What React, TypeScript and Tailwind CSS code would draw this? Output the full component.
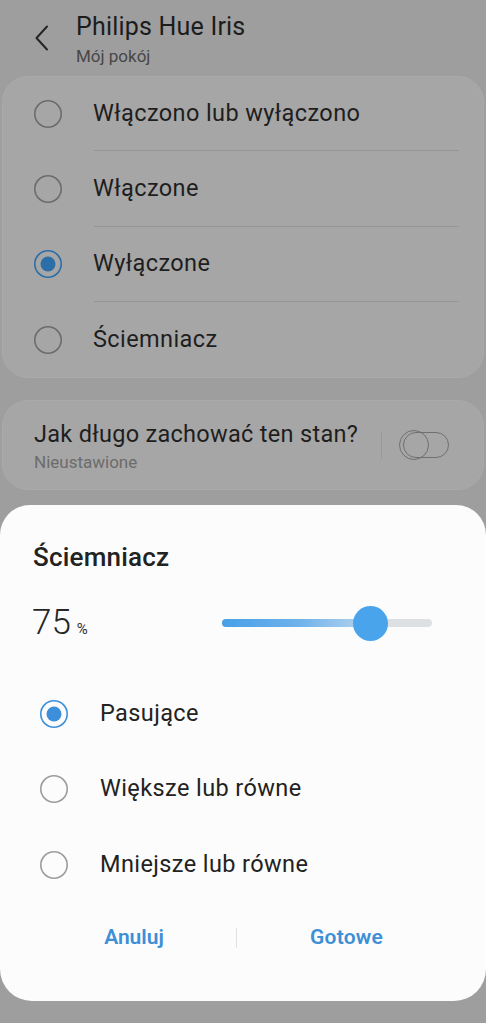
import React from "react";

function Radio({ checked, dim }: { checked?: boolean; dim?: boolean }) {
  if (checked) {
    const c = dim ? "#2b6ea8" : "#3d8fdc";
    return (
      <svg width="30" height="30" viewBox="0 0 30 30" className="shrink-0">
        <circle cx="15" cy="15" r="13.2" fill="none" stroke={c} strokeWidth="1.6" />
        <circle cx="15" cy="15" r="7.5" fill={c} />
      </svg>
    );
  }
  const c = dim ? "#6c6c6c" : "#9c9c9c";
  return (
    <svg width="30" height="30" viewBox="0 0 30 30" className="shrink-0">
      <circle cx="15" cy="15" r="13.2" fill="none" stroke={c} strokeWidth="1.6" />
    </svg>
  );
}

export default function App() {
  const font = { fontFamily: "Roboto, 'Noto Sans', sans-serif" };
  const topRows = ["Włączono lub wyłączono", "Włączone", "Wyłączone", "Ściemniacz"];
  const rowH = ["h-[73px]", "h-[75px]", "h-[74px]", "h-[75px]"];
  const sheetRows = ["Pasujące", "Większe lub równe", "Mniejsze lub równe"];
  const sheetH = ["h-[75px]", "h-[76px]", "h-[75px]"];
  return (
    <div className="w-[486px] h-[1023px] bg-[#9e9e9e] flex flex-col overflow-hidden" style={font}>
      {/* Header */}
      <div className="h-[76px] flex pt-[12px]">
        <div className="w-[76px] flex justify-start pl-[33px] pt-[13px]">
          <svg width="18" height="26" viewBox="0 0 18 26">
            <path d="M14 1.5 L3.5 13 L14 24.5" fill="none" stroke="#262626" strokeWidth="2" strokeLinecap="round" strokeLinejoin="round" />
          </svg>
        </div>
        <div className="flex flex-col">
          <div className="text-[25px] leading-[30px] tracking-[0.2px] text-[#1c1c1c]">Philips Hue Iris</div>
          <div className="text-[17px] leading-[20px] mt-[4px] text-[#474747]">Mój pokój</div>
        </div>
      </div>

      {/* Card 1 */}
      <div className="mx-[2px] rounded-[26px] bg-[#a6a6a6] border border-[#aaaaaa]">
        {topRows.map((t, i) => (
          <div key={t}>
            {i > 0 && <div className="ml-[91px] mr-[24px] h-px bg-[#959595]" />}
            <div className={`${rowH[i]} flex items-center`}>
              <div className="w-[90px] flex pl-[30px]">
                <Radio checked={i === 2} dim />
              </div>
              <div className="text-[23.5px] tracking-[0.4px] text-[#1e1e1e]">{t}</div>
            </div>
          </div>
        ))}
      </div>

      {/* Card 2 */}
      <div className="mx-[2px] mt-[22px] h-[90px] rounded-[26px] bg-[#a6a6a6] border border-[#aaaaaa] flex items-start">
        <div className="flex-1 pl-[31px] pt-[19px]">
          <div className="text-[23.5px] leading-[28px] tracking-[0.3px] text-[#1e1e1e]">Jak długo zachować ten stan?</div>
          <div className="text-[17px] leading-[20px] mt-[4px] text-[#6c6c6c]">Nieustawione</div>
        </div>
        <div className="w-px h-[28px] bg-[#999999] mr-[17px] mt-[30px]" />
        <div className="relative w-[50px] h-[30px] mr-[34px] mt-[29px]">
          <div className="absolute left-[4px] right-0 top-[2px] bottom-[2px] rounded-full border-[1.6px] border-[#707070]" />
          <div className="absolute left-0 top-0 w-[30px] h-[30px] rounded-full border-[1.6px] border-[#707070]" />
        </div>
      </div>

      {/* Sheet */}
      <div className="mt-[15px] h-[496px] bg-[#fcfcfc] rounded-t-[30px] rounded-b-[32px] flex flex-col">
        <div className="pt-[37px] pl-[33px] text-[26px] leading-[30px] tracking-[0.2px] font-medium text-[#222222]">Ściemniacz</div>
        <div className="mt-[31px] h-[40px] flex items-center">
          <div className="w-[222px] pl-[32px] flex items-baseline">
            <span className="text-[35px] leading-[40px] font-light text-[#262626]">75</span>
            <span className="text-[15px] ml-[6px] text-[#333333]">%</span>
          </div>
          <div className="relative w-[210px] h-[8px]">
            <div className="absolute inset-0 rounded-full bg-[#dde0e3]" />
            <div className="absolute left-0 top-0 h-[8px] w-[150px] rounded-full bg-gradient-to-r from-[#47a0e8] via-[#6db2ea] to-[#b8d5ee]" />
            <div className="absolute left-[131px] top-[-13.5px] w-[35px] h-[35px] rounded-full bg-[#4aa4ec]" />
          </div>
        </div>
        <div className="mt-[33px]">
          {sheetRows.map((t, i) => (
            <div key={t} className={`${sheetH[i]} flex items-center`}>
              <div className="w-[100px] flex pl-[39px]">
                <Radio checked={i === 0} />
              </div>
              <div className="text-[23.5px] tracking-[0.4px] text-[#222222]">{t}</div>
            </div>
          ))}
        </div>
        <div className="mt-[11px] h-[50px] flex items-center pl-[32px]">
          <div className="w-[204px] text-center text-[21px] font-semibold text-[#3d8fd6]">Anuluj</div>
          <div className="w-px h-[20px] bg-[#e2e2e2]" />
          <div className="w-[219px] text-center text-[21px] tracking-[0.2px] font-semibold text-[#3d8fd6]">Gotowe</div>
        </div>
      </div>
    </div>
  );
}
